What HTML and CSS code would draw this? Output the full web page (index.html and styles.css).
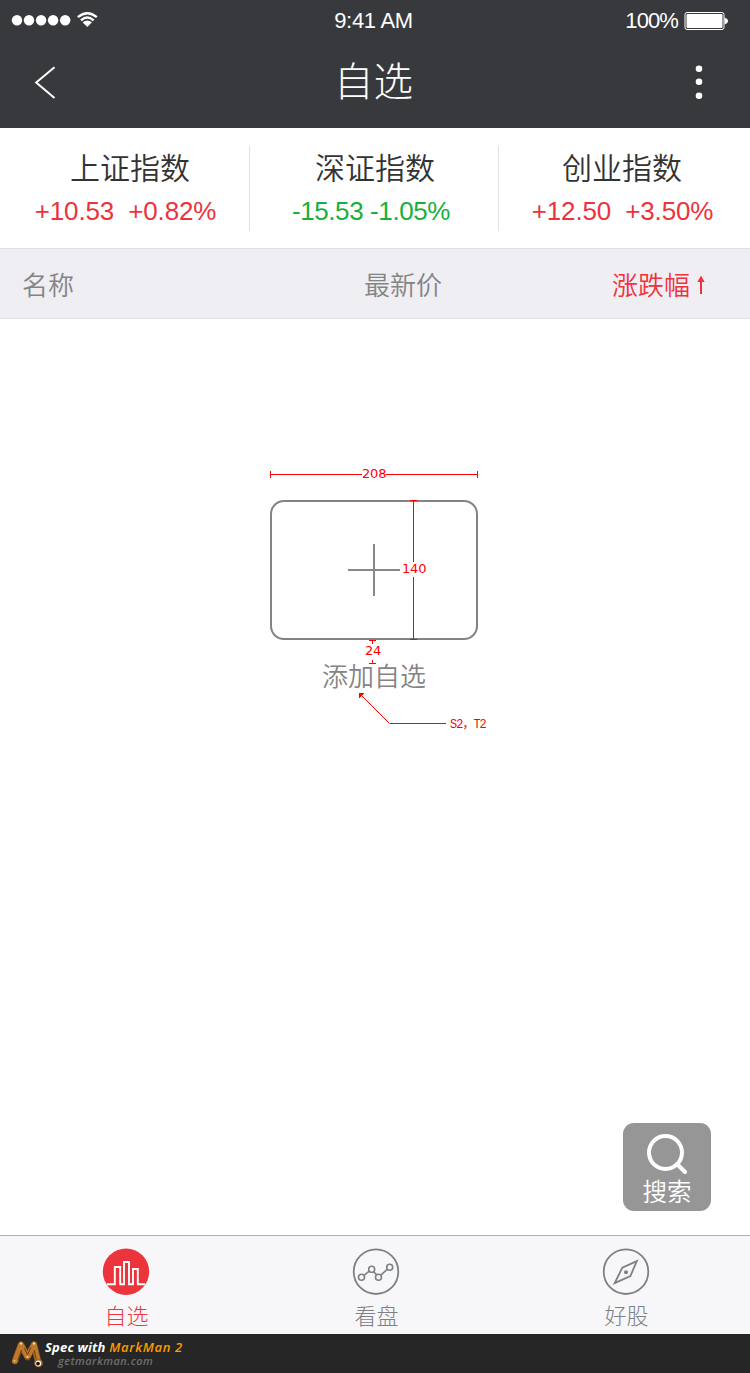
FILE: index.html
```html
<!DOCTYPE html>
<html lang="zh-CN">
<head>
<meta charset="utf-8">
<title>自选</title>
<link rel="stylesheet" href="styles.css">
</head>
<body>
<div class="app">
  <header class="header">
    <div class="status">
      <div class="status-left">
        <svg width="100" height="40" viewBox="0 0 100 40">
          <g fill="#fff"><circle cx="17" cy="20.3" r="5.2"/><circle cx="29" cy="20.3" r="5.2"/><circle cx="41.1" cy="20.3" r="5.2"/><circle cx="53.1" cy="20.3" r="5.2"/><circle cx="65.2" cy="20.3" r="5.2"/><path d="M87.3 26.9L82.6 22.3Q87.3 18.7 92 22.3Z"/></g>
          <g fill="none" stroke="#fff" stroke-width="2.4"><path d="M77.8 17.2Q87.3 9.2 96.8 17.2"/><path d="M81 20.3Q87.3 14.800 93.6 20.3"/></g>
        </svg>
      </div>
      <div class="status-time">9:41 AM</div>
      <div class="status-right">
        <span class="battery-label">100%</span>
        <svg width="46" height="20" viewBox="0 0 46 20">
          <rect x="2" y="1.500" width="39" height="17" rx="2" fill="none" stroke="#fff"/>
          <rect x="3.500" y="3" width="36" height="14" rx="1" fill="#fff"/>
          <path d="M41.500 6.500Q45 7.700 45 10T41.500 13.500Z" fill="#fff"/>
        </svg>
      </div>
    </div>
    <nav class="navbar">
      <svg class="back" width="24" height="36" viewBox="0 0 24 36"><path d="M21.5 2.2L3.2 17.5L21.5 33" fill="none" stroke="#fff" stroke-width="2"/></svg>
      <h1 class="title">自选</h1>
      <svg class="more" width="10" height="38" viewBox="0 0 10 38"><g fill="#fff"><circle cx="5" cy="5.8" r="3.3"/><circle cx="5" cy="18.8" r="3.3"/><circle cx="5" cy="32.8" r="3.3"/></g></svg>
    </nav>
  </header>

  <section class="indices">
    <div class="index index-sh"><div class="index-name">上证指数</div><div class="index-value up">+10.53&nbsp; +0.82%</div></div>
    <div class="index index-sz"><div class="index-name">深证指数</div><div class="index-value down">-15.53 -1.05%</div></div>
    <div class="index index-cy"><div class="index-name">创业指数</div><div class="index-value up">+12.50&nbsp; +3.50%</div></div>
  </section>

  <div class="columns">
    <span class="col-name">名称</span>
    <span class="col-price">最新价</span>
    <span class="col-change">涨跌幅<svg width="10" height="22" viewBox="0 -2 10 22"><path d="M5 0.5L8.6 7H1.4Z" fill="#f0323c"/><rect x="4" y="6" width="2" height="13" fill="#f0323c"/></svg></span>
  </div>

  <main class="content">
    <div class="add">
      <div class="add-box">
        <svg width="52" height="52" viewBox="0 0 52 52"><path d="M0 26H52M26 0V52" stroke="#888" stroke-width="2"/></svg>
      </div>
      <div class="add-label">添加自选</div>
      <svg class="marks" width="240" height="280" viewBox="0 0 240 280" shape-rendering="crispEdges">
        <g fill="none" stroke="#f00" stroke-width="1">
          <path d="M10.5 11V18M217.5 11V18M11 14.5H102M126 14.5H217"/>
          <path d="M150 40.5H157M150 179.5H157"/>
          <path d="M109 180.5H116M112.5 181V184M112.5 200V203M109 203.5H116"/>
          <path d="M129.500 263.500H186"/>
        </g>
        <path d="M153.500 41V102M153.500 117V179" stroke="#f00"/>
        <path d="M101 235L129.500 263.500" stroke="#f00" shape-rendering="auto"/>
        <path d="M99 233H104L99 238Z" fill="#f00"/>
      </svg>
      <span class="mark mark-width">208</span>
      <span class="mark mark-height">140</span>
      <span class="mark mark-gap">24</span>
      <span class="mark-note">S2，T2</span>
    </div>
    <button class="search">
      <svg width="44" height="42" viewBox="0 0 44 42"><g fill="none" stroke="#fff" stroke-width="4"><circle cx="20.500" cy="20.500" r="16.500"/><path d="M32 32L40 40" stroke-linecap="round"/></g></svg>
      <span>搜索</span>
    </button>
  </main>

  <nav class="tabs">
    <a class="tab active">
      <svg width="48" height="48" viewBox="0 0 48 48"><circle cx="24" cy="23.700" r="23.200" fill="#ec343c"/><path d="M5 36.200H12.800V19H18.200V36.200H22V14H27V36.200H31V21H35.800V36.200H43" fill="none" stroke="#fff" stroke-width="1.900"/></svg>
      <span>自选</span>
    </a>
    <a class="tab">
      <svg width="48" height="48" viewBox="0 0 48 48"><g fill="none" stroke="#7d8084"><circle cx="24" cy="23.700" r="22.300" stroke-width="1.800"/><g stroke-width="1.600"><circle cx="9.500" cy="29.200" r="3"/><circle cx="19.700" cy="21.300" r="3"/><circle cx="26.500" cy="29.200" r="3"/><circle cx="37.700" cy="19.200" r="3"/><path d="M12 27.300L17.200 23.200M21.700 23.700L24.600 26.900M28.800 27.100L35.400 21.200"/></g></g></svg>
      <span>看盘</span>
    </a>
    <a class="tab">
      <svg width="48" height="48" viewBox="0 0 48 48"><g fill="none" stroke="#7d8084"><circle cx="24" cy="23.700" r="22.300" stroke-width="1.800"/><path d="M34.800 13.100L20.300 19.700L12.700 35.100L28.400 28Z" stroke-width="1.800"/></g><circle cx="24" cy="24.300" r="2" fill="#7d8084"/></svg>
      <span>好股</span>
    </a>
  </nav>

  <footer class="credit">
    <svg width="34" height="30" viewBox="0 0 34 30">
      <g fill="none" stroke-linecap="round" stroke-linejoin="round"><path d="M5 22L11 5.500L17.500 18L24 5.500L27.500 20" stroke="#8f5317" stroke-width="6.500"/><path d="M5 22L11 5.500L17.500 18L24 5.500L27.500 20" stroke="#bd792c" stroke-width="5.500" stroke-dasharray=".1 3.200"/></g>
      <path d="M14.200 9L17.500 15.500L21 8.500M8 21L11.500 11M24 11L26.500 21" fill="none" stroke="#5c3410" stroke-width=".9"/>
      <circle cx="11" cy="4.500" r="1.200" fill="#f5d896"/><circle cx="24" cy="4.500" r="1.200" fill="#f5d896"/><circle cx="17.500" cy="18" r="1.100" fill="#f5d896"/><circle cx="4.500" cy="22" r="1" fill="#eebf70"/>
      <circle cx="28.500" cy="24" r="4.300" fill="#a96722"/><circle cx="28.300" cy="24.300" r="2.900" fill="#fff"/><circle cx="28" cy="24.600" r="1.900" fill="#111"/>
    </svg>
    <div class="credit-text">
      <div class="credit-name">Spec with <b>MarkMan 2</b></div>
      <div class="credit-site">getmarkman.com</div>
    </div>
  </footer>
</div>
</body>
</html>
```
FILE: styles.css
```css
* { box-sizing: border-box; }
body { margin: 0; font-family: "Liberation Sans", "Noto Sans CJK SC", sans-serif; background: #fff; }
svg { display: block; flex: none; }
.app { width: 750px; height: 1373px; display: flex; flex-direction: column; overflow: hidden; }

.header { height: 128px; background: #38393d; color: #fff; }
.status { height: 40px; display: grid; grid-template-columns: 250px 247px 253px; font-size: 22px; line-height: 41px; }
.status-time { text-align: center; letter-spacing: -.3px; }
.status-right { display: flex; align-items: center; justify-content: flex-end; gap: 5px; padding-right: 21px; }
.battery-label { letter-spacing: -.9px; }
.navbar { height: 88px; display: grid; grid-template-columns: 60px 1fr 60px; padding: 0 15px 0 16px; }
.back { margin: 25px 0 0 17px; }
.title { margin: 0; padding-right: 4px; text-align: center; font: 300 39.5px/77px "Noto Sans CJK SC", sans-serif; }
.more { margin: 23px 0 0 19px; }

.indices { height: 120px; display: grid; grid-template-columns: 250px 249px 251px; padding-top: 18px; }
.index { height: 85px; border-right: 1px solid #e2e2e4; text-align: center; white-space: nowrap; }
.index-cy { border: 0; }
.index-name { height: 45px; font: 350 30px/40px "Noto Sans CJK SC", sans-serif; color: #333; padding-left: 11px; }
.index-sz .index-name { padding-left: 2px; }
.index-cy .index-name { padding: 0 5px 0 0; }
.index-value { font-size: 26px; line-height: 41px; letter-spacing: -.15px; padding-left: 2px; }
.index-sz .index-value { padding: 0 6px 0 0; letter-spacing: -.4px; }
.index-cy .index-value { padding: 0 4px 0 0; }
.up { color: #ee323b; }
.down { color: #17b03d; }

.columns { height: 71px; border-top: 1px solid #e0e0e2; border-bottom: 1px solid #e0e0e2; background: #efeef3; display: grid; grid-template-columns: 342px 248px 1fr; padding-left: 22px; font: 350 26px/69px "Noto Sans CJK SC", sans-serif; color: #848484; }
.col-change { display: flex; align-items: center; gap: 6px; color: #f0323c; }

.content { flex: 1; display: flex; flex-direction: column; justify-content: space-between; }
.add { position: relative; width: 208px; margin: 181px 0 0 270px; text-align: center; }
.add-box { height: 140px; border: 2px solid #838383; border-radius: 14px; display: flex; align-items: center; justify-content: center; }
.add-label { font: 350 26px/38px "Noto Sans CJK SC", sans-serif; color: #848484; padding-top: 16px; }
.marks { position: absolute; left: -10px; top: -40px; }
.mark { position: absolute; font: 13px/16px "DejaVu Sans", sans-serif; letter-spacing: -.2px; color: #f00; }
.mark-width { left: 92px; top: -34px; }
.mark-height { left: 132px; top: 61px; }
.mark-gap { left: 95px; top: 143px; }
.mark-note { position: absolute; left: 180px; top: 217px; white-space: nowrap; font: 12px/16px "Liberation Mono", "Noto Sans CJK SC", monospace; letter-spacing: -1px; color: #f00; }

.search { width: 88px; height: 88px; margin: 0 39px 24px auto; padding: 9px 0 0; border: 0; border-radius: 11px; background: #969696; color: #fff; display: flex; flex-direction: column; align-items: center; font: 350 24.5px/34px "Noto Sans CJK SC", sans-serif; }

.tabs { height: 99px; background: #f7f7f9; border-top: 1px solid #b0b0b2; display: grid; grid-template-columns: 250px 250px 250px; padding-left: 1px; }
.tab { padding-top: 12px; display: flex; flex-direction: column; align-items: center; font: 300 22px/36px "Noto Sans CJK SC", sans-serif; color: #7d8084; }
.tab span { padding-left: 1px; }
.active { color: #ee3540; }

.credit { height: 39px; background: #262626; display: flex; padding: 5px 0 0 10px; font-family: "Open Sans", sans-serif; font-style: italic; font-weight: 700; }
.credit-name { color: #fff; font-size: 13px; line-height: 17px; letter-spacing: .2px; padding-left: 1px; white-space: nowrap; }
.credit-name b { color: #f90; font-weight: 600; letter-spacing: .65px; }
.credit-site { color: #6e6e6e; font-size: 11px; line-height: 11px; padding-left: 14px; letter-spacing: .45px; margin-top: -1px; font-weight: 600; }
```
